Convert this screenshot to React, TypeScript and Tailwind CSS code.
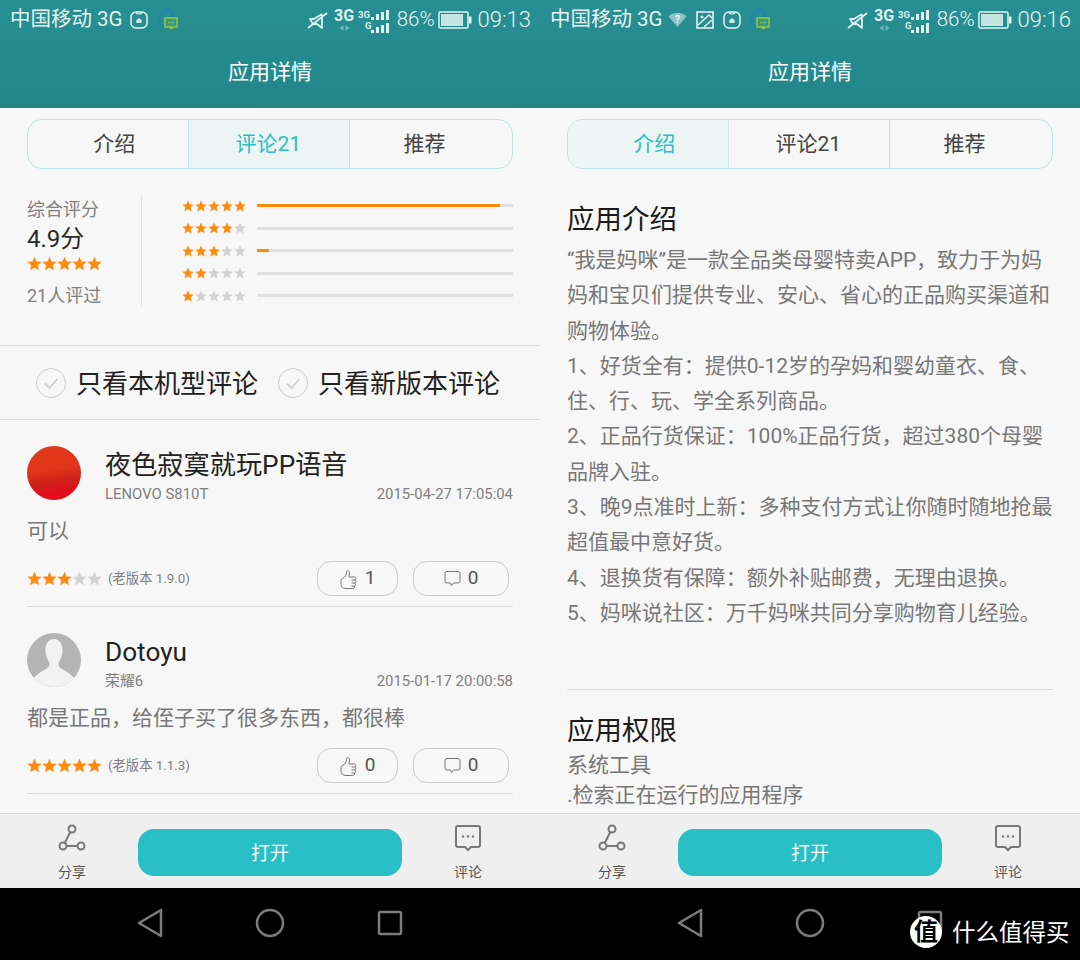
import type { ReactNode } from 'react';

const ORANGE = '#ff8a0c';
const GREY_STAR = '#d2d2d2';

function Stars({ filled, size, step }: { filled: number; size: number; step: number }) {
  return (
    <div className="flex shrink-0" style={{ gap: step - size }}>
      {[0, 1, 2, 3, 4].map((i) => (
        <svg key={i} width={size} height={size} viewBox="0 0 24 24">
          <polygon
            points="12,1 15.2,8.6 23.4,9.3 17.2,14.7 19.1,22.8 12,18.5 4.9,22.8 6.8,14.7 0.6,9.3 8.8,8.6"
            fill={i < filled ? ORANGE : GREY_STAR}
          />
        </svg>
      ))}
    </div>
  );
}

function HuaweiIcon() {
  return (
    <svg width="18" height="18" viewBox="0 0 18 18" fill="none" className="shrink-0">
      <rect x="1" y="1" width="16" height="16" rx="5" stroke="#e4f3f3" strokeWidth="1.5" />
      <path d="M6 1.5c.6 2 5.4 2 6 0" stroke="#e4f3f3" strokeWidth="1.2" />
      <path d="M9 7c-1 1-3 2-3 3.500 0 1 1 1.500 3 1.500s3-.5 3-1.500C12 9 10 8 9 7z" fill="#cfe6e6" />
    </svg>
  );
}

function QqIcon() {
  return (
    <svg width="20" height="22" viewBox="0 0 20 22" fill="none" className="shrink-0">
      <path d="M3 15C0 12 1 9 3.500 8 4 3 7 1 9.500 1S15 3 15.500 8" stroke="#1c7fc0" strokeWidth="1.6" />
      <path d="M3 15c1 2 3 3 5 3" stroke="#1c7fc0" strokeWidth="1.6" />
      <rect x="7" y="9" width="12" height="9" fill="#2b9b8c" stroke="#9cc832" strokeWidth="1.5" />
      <path d="M10 13.500h6" stroke="#9cc832" strokeWidth="1.3" strokeDasharray="1.3 1" />
      <path d="M12 18h3v2h-3z" fill="#9cc832" />
    </svg>
  );
}

function WifiIcon() {
  return (
    <svg width="19" height="15" viewBox="0 0 19 15" className="shrink-0">
      <path d="M0.500 4.500C5 -0.500 14-0.500 18.500 4.500L9.500 15z" fill="#8fc4c6" />
      <text x="9.500" y="10.500" textAnchor="middle" fontSize="10" fontWeight="700" fill="#e4f3f3" fontFamily="Roboto">?</text>
    </svg>
  );
}

function ImageIcon() {
  return (
    <svg width="18" height="18" viewBox="0 0 18 18" fill="none" className="shrink-0">
      <rect x="1" y="1" width="16" height="16" stroke="#e4f3f3" strokeWidth="1.6" />
      <circle cx="6" cy="6" r="1.500" fill="#e4f3f3" />
      <path d="M2 14 13 4l3 3M8 16l8-7" stroke="#e4f3f3" strokeWidth="1.500" />
    </svg>
  );
}

function MuteIcon() {
  return (
    <svg width="21" height="20" viewBox="0 0 21 20" fill="none" className="shrink-0">
      <path d="M15 5v13l-5-4H6L3 9h4l8-5" stroke="#dff0f0" strokeWidth="1.800" strokeLinejoin="round" />
      <path d="M1 18 20 3" stroke="#dff0f0" strokeWidth="1.800" />
    </svg>
  );
}

function NetworkIcons() {
  return (
    <div className="flex items-start shrink-0">
      <svg width="21" height="26" viewBox="0 0 21 26" className="mt-[2px]">
        <text x="0" y="14" fontSize="16" fontWeight="700" fill="#dff0f0" fontFamily="Roboto">3G</text>
        <path d="M9.500 18v6l-4-3zM11.500 18v6l4-3z" fill="#6fb6b8" />
      </svg>
      <svg width="31" height="26" viewBox="0 0 31 26" className="ml-[3px] mt-[4px]">
        <text x="0" y="9" fontSize="9.500" fontWeight="700" fill="#dff0f0" fontFamily="Roboto">3G</text>
        <text x="7" y="20" fontSize="9.500" fontWeight="700" fill="#dff0f0" fontFamily="Roboto">G</text>
        <rect x="13" y="8" width="3" height="3" fill="#dff0f0" />
        <rect x="18" y="5" width="3" height="6" fill="#dff0f0" />
        <rect x="23" y="3" width="3" height="8" fill="#dff0f0" />
        <rect x="28" y="1" width="3" height="10" fill="#dff0f0" />
        <rect x="13" y="21" width="3" height="3" fill="#dff0f0" />
        <rect x="18" y="18" width="3" height="6" fill="#dff0f0" />
        <rect x="23" y="16" width="3" height="8" fill="#dff0f0" />
        <rect x="28" y="14" width="3" height="10" fill="#dff0f0" />
      </svg>
    </div>
  );
}

function Battery() {
  return (
    <svg width="34" height="18" viewBox="0 0 34 18" className="shrink-0">
      <rect x="1" y="1" width="29" height="16" rx="1.500" fill="none" stroke="#e4f3f3" strokeWidth="1.500" />
      <rect x="3" y="3" width="22" height="12" fill="#c5e3e1" />
      <rect x="31" y="5.500" width="2.500" height="7" fill="#e4f3f3" />
    </svg>
  );
}

function StatusBar({ icons, time }: { icons: ReactNode; time: string }) {
  return (
    <div className="flex h-[38px] items-center pl-[10px] pr-[9px] pt-[1px] text-[#e6f3f3]">
      <span className="whitespace-nowrap text-[20.5px]">中国移动 3G</span>
      {icons}
      <div className="ml-auto flex items-center">
        <MuteIcon />
        <div className="ml-[6px]">
          <NetworkIcons />
        </div>
        <span className="ml-[8px] text-[20.5px] font-light">86%</span>
        <div className="ml-[3px]">
          <Battery />
        </div>
        <span className="ml-[6px] text-[22px] font-light">{time}</span>
      </div>
    </div>
  );
}

function Tabs({ active }: { active: number }) {
  const labels = ['介绍', '评论21', '推荐'];
  const spacing = ['pl-[13px]', 'pr-[1px]', 'pr-[13px]'];
  return (
    <div className="mx-[27px] mt-[11px] grid h-[50px] grid-cols-[159.5px_161.5px_1fr] overflow-hidden rounded-[15px] border-[1.500px] border-[#b9e3e6]">
      {labels.map((label, i) => (
        <div
          key={label}
          className={`flex items-center justify-center border-[#c4e6e8] pt-[2px] text-[21px] ${spacing[i]} ${i > 0 ? 'border-l' : ''} ${
            i === active ? 'bg-[#ecf4f4] text-[#2bbfc6]' : 'text-[#444444]'
          }`}
        >
          {label}
        </div>
      ))}
    </div>
  );
}

function ShareIcon() {
  return (
    <svg width="30" height="28" viewBox="0 0 30 28" fill="none" stroke="#777777" strokeWidth="2">
      <circle cx="15" cy="5" r="3.500" />
      <circle cx="6" cy="22" r="3.500" />
      <circle cx="24" cy="22" r="3.500" />
      <path d="M13.300 8 7.700 19M9.500 22h11" />
    </svg>
  );
}

function CommentIcon() {
  return (
    <svg width="28" height="28" viewBox="0 0 28 28" fill="none">
      <path
        d="M4 2h20a2 2 0 0 1 2 2v17a2 2 0 0 1-2 2h-7l-3 3-3-3H4a2 2 0 0 1-2-2V4a2 2 0 0 1 2-2z"
        stroke="#777777"
        strokeWidth="2"
      />
      <circle cx="9" cy="12.500" r="1.200" fill="#777777" />
      <circle cx="14" cy="12.500" r="1.200" fill="#777777" />
      <circle cx="19" cy="12.500" r="1.200" fill="#777777" />
    </svg>
  );
}

function ThumbIcon() {
  return (
    <svg width="19" height="20" viewBox="0 0 19 20" fill="none" stroke="#777777" strokeWidth="1">
      <path d="M1 11.500c0-1 .8-1.800 2-2.300 2-1 3.500-3 3.500-5.500V2.500c0-1.500 3-1.500 3 1.500 0 1.500-.5 3-.5 4h5.500c2 0 2 3 0 3 2 0 2 3 0 3 1.500 0 1.500 3 0 3 .5 2-1 2.500-2 2.500H6c-3 0-5-1.500-5-4z" />
      <path d="M14.500 11h-3M14.500 14h-3M14.500 17h-3" />
    </svg>
  );
}

function BottomBar() {
  return (
    <div className="flex h-[75px] shrink-0 border-t border-[#dadada] bg-[#efefef]">
      <div className="flex w-[138px] shrink-0 flex-col items-center pl-[6px] pt-[10px]">
        <ShareIcon />
        <span className="mt-[11px] text-[14px] leading-[18px] text-[#555555]">分享</span>
      </div>
      <div className="mt-[15px] flex h-[47px] w-[264px] items-center justify-center rounded-[16px] bg-[#28c0c6] pt-[3px] text-[19px] text-white">
        打开
      </div>
      <div className="flex flex-1 flex-col items-center pr-[6px] pt-[10px]">
        <CommentIcon />
        <span className="mt-[11px] text-[14px] leading-[18px] text-[#555555]">评论</span>
      </div>
    </div>
  );
}

function NavBar() {
  return (
    <div className="flex h-[72px] shrink-0 items-center justify-center gap-[90px] bg-black pb-[2px]">
      <svg width="30" height="30" viewBox="0 0 30 30" fill="none" stroke="#7c7c7c" strokeWidth="2.500" strokeLinejoin="round">
        <path d="M26 2v26L4 15z" />
      </svg>
      <svg width="30" height="30" viewBox="0 0 30 30" fill="none" stroke="#7c7c7c" strokeWidth="2.500">
        <circle cx="15" cy="15" r="13" />
      </svg>
      <svg width="30" height="30" viewBox="0 0 30 30" fill="none" stroke="#7c7c7c" strokeWidth="2.500">
        <rect x="4" y="4" width="22" height="22" rx="1.500" />
      </svg>
    </div>
  );
}

function Phone({ icons, time, active, children }: { icons: ReactNode; time: string; active: number; children: ReactNode }) {
  return (
    <div className="flex h-[960px] w-[540px] flex-col bg-[#f7f7f7]">
      <div className="h-[108px] shrink-0 bg-gradient-to-b from-[#278f93] to-[#238689]">
        <StatusBar icons={icons} time={time} />
        <div className="flex h-[70px] items-start justify-center pt-[20px] text-[21px] leading-[28px] text-white">应用详情</div>
      </div>
      <div className="flex-1 overflow-hidden">
        <Tabs active={active} />
        {children}
      </div>
      <BottomBar />
      <NavBar />
    </div>
  );
}

function RatingRow({ stars, percent }: { stars: number; percent: number }) {
  return (
    <div className="flex h-[21px] items-center">
      <Stars filled={stars} size={12} step={13} />
      <div className="ml-[11px] h-[3px] flex-1 bg-[#e0e0e0]">
        <div className="h-full bg-[#ff8a0c]" style={{ width: `${percent}%` }} />
      </div>
    </div>
  );
}

function Filter({ label }: { label: string }) {
  return (
    <div className="flex items-center gap-[10px]">
      <svg width="30" height="30" viewBox="0 0 30 30" fill="none">
        <circle cx="15" cy="15" r="14.500" stroke="#cccccc" />
        <path d="M9 15.500l4.500 4.500L21.500 11" stroke="#cfcfcf" strokeWidth="1.800" />
      </svg>
      <span className="pt-[3px] text-[26px] text-[#222222]">{label}</span>
    </div>
  );
}

function AvatarPerson() {
  return (
    <div className="h-[54px] w-[54px] shrink-0 overflow-hidden rounded-full bg-[#b4b4b4]">
      <svg width="54" height="54" viewBox="0 0 54 54">
        <path
          d="M27 6c-6 0-9 6-8.500 12 .3 5 2 8 3.500 11 .8 2 .5 4-1 5.500C17 38 9 40 4 49c6 4 14 5 23 5s17-1 23-5c-5-9-13-11-17-14.500-1.500-1.500-1.800-3.500-1-5.500 1.500-3 3.200-6 3.500-11C36 12 33 6 27 6z"
          fill="#f2f2f2"
        />
      </svg>
    </div>
  );
}

function Avatar() {
  return <div className="h-[54px] w-[54px] shrink-0 rounded-full bg-[linear-gradient(172deg,#e03a1c_0%,#e0351a_45%,#cc2318_62%,#e40c1e_82%,#e0101e_100%)]" />;
}

function CommentItem({
  avatar,
  name,
  device,
  date,
  text,
  stars,
  version,
  likes,
}: {
  avatar: ReactNode;
  name: string;
  device: string;
  date: string;
  text: string;
  stars: number;
  version: string;
  likes: number;
}) {
  return (
    <div className="border-b border-[#dfdfdf] pb-[10px] pt-[26px]">
      <div className="flex h-[54px]">
        {avatar}
        <div className="ml-[24px] flex-1">
          <div className="h-[36px] pt-[1px] text-[26.200px] leading-[36px] text-[#222222]">{name}</div>
          <div className="mt-[3px] flex h-[18px] items-center justify-between text-[14.900px] text-[#808080]">
            <span>{device}</span>
            <span>{date}</span>
          </div>
        </div>
      </div>
      <div className="mt-[16px] h-[30px] text-[21px] leading-[30px] text-[#777777]">{text}</div>
      <div className="mt-[15px] flex h-[35px] items-center">
        <Stars filled={stars} size={15} step={15} />
        <span className="ml-[6px] text-[13.300px] text-[#808080]">{version}</span>
        <div className="ml-auto mr-[4px] flex gap-[15px]">
          <div className="flex h-[35px] w-[81px] items-center justify-center gap-[6px] rounded-[14px] border border-[#c8c8c8] text-[19px] text-[#555555]">
            <ThumbIcon />
            {likes}
          </div>
          <div className="flex h-[35px] w-[96px] items-center justify-center gap-[7px] rounded-[14px] border border-[#c8c8c8] text-[19px] text-[#555555]">
            <svg width="17" height="17" viewBox="0 0 17 17" fill="none" stroke="#777777" strokeWidth="1">
              <path d="M3 1.500h11a2 2 0 0 1 2 2v7.500a2 2 0 0 1-2 2H9.500L7.500 15.500 6.500 13H3a2 2 0 0 1-2-2V3.500a2 2 0 0 1 2-2z" />
            </svg>
            0
          </div>
        </div>
      </div>
    </div>
  );
}

function ReviewsTab() {
  return (
    <>
      <div className="mx-[27px] mt-[26px] flex h-[111px]">
        <div className="w-[115px] shrink-0 border-r border-[#e2e2e2] pt-[2px]">
          <div className="text-[18px] leading-[26px] text-[#808080]">综合评分</div>
          <div className="text-[24px] leading-[32px] text-[#2a2a2a]">4.9分</div>
          <div className="mt-[1px]">
            <Stars filled={5} size={15} step={15} />
          </div>
          <div className="mt-[12px] text-[18px] leading-[26px] text-[#808080]">21人评过</div>
        </div>
        <div className="flex flex-1 flex-col justify-between pl-[40px]">
          <RatingRow stars={5} percent={95} />
          <RatingRow stars={4} percent={0} />
          <RatingRow stars={3} percent={4.500} />
          <RatingRow stars={2} percent={0} />
          <RatingRow stars={1} percent={0} />
        </div>
      </div>
      <div className="mt-[39px] flex h-[75px] items-center gap-[20px] border-y border-[#dddddd] pl-[36px]">
        <Filter label="只看本机型评论" />
        <Filter label="只看新版本评论" />
      </div>
      <div className="mx-[27px]">
        <CommentItem
          avatar={<Avatar />}
          name="夜色寂寞就玩PP语音"
          device="LENOVO S810T"
          date="2015-04-27 17:05:04"
          text="可以"
          stars={3}
          version="(老版本 1.9.0)"
          likes={1}
        />
        <CommentItem
          avatar={<AvatarPerson />}
          name="Dotoyu"
          device="荣耀6"
          date="2015-01-17 20:00:58"
          text="都是正品，给侄子买了很多东西，都很棒"
          stars={5}
          version="(老版本 1.1.3)"
          likes={0}
        />
      </div>
    </>
  );
}

const introLines = [
  '“我是妈咪”是一款全品类母婴特卖APP，致力于为妈',
  '妈和宝贝们提供专业、安心、省心的正品购买渠道和',
  '购物体验。',
  '1、好货全有：提供0-12岁的孕妈和婴幼童衣、食、',
  '住、行、玩、学全系列商品。',
  '2、正品行货保证：100%正品行货，超过380个母婴',
  '品牌入驻。',
  '3、晚9点准时上新：多种支付方式让你随时随地抢最',
  '超值最中意好货。',
  '4、退换货有保障：额外补贴邮费，无理由退换。',
  '5、妈咪说社区：万千妈咪共同分享购物育儿经验。',
];

function IntroTab() {
  return (
    <div className="mx-[27px] pt-[31px]">
      <h2 className="text-[27.500px] leading-[40px] text-[#1c1c1c]">应用介绍</h2>
      <div className="mt-[3px] text-[21px] leading-[35.300px] text-[#777777]">
        {introLines.map((line) => (
          <div key={line} className="whitespace-nowrap">
            {line}
          </div>
        ))}
      </div>
      <div className="mt-[58px] border-t border-[#dfdfdf]" />
      <h2 className="mt-[21px] text-[27.500px] leading-[39px] text-[#1c1c1c]">应用权限</h2>
      <div className="text-[21px] leading-[30px] text-[#777777]">系统工具</div>
      <div className="text-[21px] leading-[30px] text-[#777777]">.检索正在运行的应用程序</div>
    </div>
  );
}

export default function App() {
  return (
    <div className="relative flex h-[960px] w-[1080px] overflow-hidden font-[Roboto,'Noto_Sans_CJK_SC',sans-serif]">
      <Phone
        time="09:13"
        active={1}
        icons={
          <div className="ml-[7px] flex items-center gap-[10px]">
            <HuaweiIcon />
            <QqIcon />
          </div>
        }
      >
        <ReviewsTab />
      </Phone>
      <Phone
        time="09:16"
        active={0}
        icons={
          <div className="ml-[5px] flex items-center gap-[9px]">
            <WifiIcon />
            <ImageIcon />
            <HuaweiIcon />
            <QqIcon />
          </div>
        }
      >
        <IntroTab />
      </Phone>

      {/* Marca de agua sobre la barra de navegación */}
      <div className="absolute left-[910px] top-[916px] flex items-center gap-[10px]">
        <div className="flex h-[32px] w-[32px] items-center justify-center rounded-full bg-white font-['Liberation_Serif','Noto_Sans_CJK_SC',serif] text-[24px] font-bold leading-none text-black">
          值
        </div>
        <span className="mt-[3px] text-[23.500px] leading-none text-white">什么值得买</span>
      </div>
    </div>
  );
}
